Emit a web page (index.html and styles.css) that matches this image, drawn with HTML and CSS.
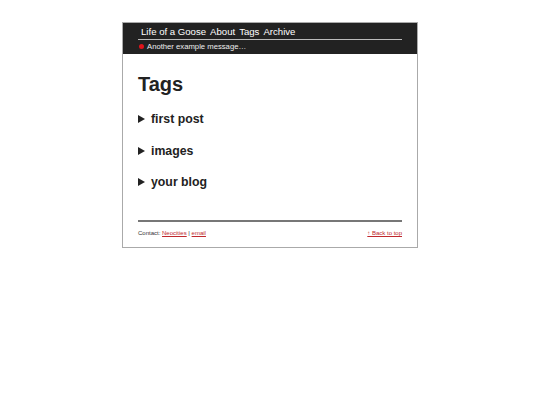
FILE: index.html
```html
<!DOCTYPE html>
<html>
<head>
<meta charset="utf-8">
<link rel="stylesheet" href="styles.css">
</head>
<body>
<div class="page">
  <header class="top">
    <nav class="nav">
      <a href="#">Life of a Goose</a>
      <a href="#">About</a>
      <a href="#">Tags</a>
      <a href="#">Archive</a>
    </nav>
    <div class="msg"><span class="dot"></span>Another example message…</div>
  </header>
  <main class="content">
    <h1>Tags</h1>
    <details class="tag"><summary>first post</summary></details>
    <details class="tag"><summary>images</summary></details>
    <details class="tag"><summary>your blog</summary></details>
  </main>
  <footer class="foot">
    <span>Contact: <a href="#">Neocities</a> | <a href="#">email</a></span>
    <a href="#">↑ Back to top</a>
  </footer>
</div>
</body>
</html>
```
FILE: styles.css
```css
html, body {
  margin: 0;
  padding: 0;
  background: #fff;
  font-family: "Liberation Sans", Arial, sans-serif;
}
.page {
  width: 294px;
  margin: 22px auto 0;
  border: 1px solid #aaa;
  background: #fff;
}
.top {
  background: #222;
  padding: 1px 15px 1px;
}
.nav {
  display: flex;
  gap: 4px;
  padding: 0 3px;
  border-bottom: 1px solid #bbb;
  height: 15px;
}
.nav a {
  color: #fff;
  text-decoration: none;
  font-size: 9.6px;
  line-height: 15px;
}
.msg {
  display: flex;
  align-items: center;
  color: #eee;
  font-size: 7.7px;
  line-height: 13px;
  padding-left: 1px;
}
.dot {
  width: 5px;
  height: 5px;
  border-radius: 50%;
  background: #e0141b;
  margin-right: 3px;
}
.content {
  padding: 18px 15px 14.5px;
  color: #222;
}
h1 {
  margin: 0 0 15px;
  font-size: 20px;
  line-height: 24px;
}
.tag summary {
  font-size: 12.3px;
  font-weight: bold;
  line-height: 16px;
  margin-bottom: 15.5px;
  cursor: pointer;
}
.foot {
  margin: 0 15px;
  border-top: 2px solid #777;
  display: flex;
  justify-content: space-between;
  padding: 8px 0 10px;
  font-size: 6px;
  line-height: 7px;
  color: #333;
}
.foot a {
  color: #c0282d;
}
```
